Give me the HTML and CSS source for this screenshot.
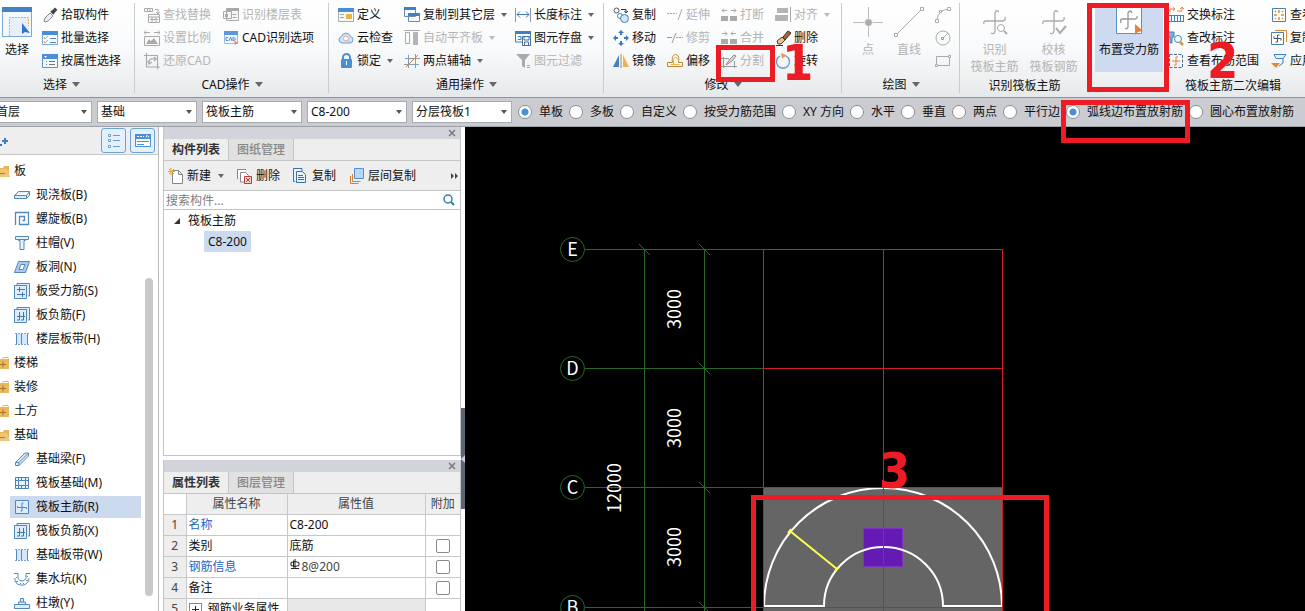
FILE: index.html
```html
<!DOCTYPE html>
<html lang="zh-CN">
<head>
<meta charset="utf-8">
<title>筏板主筋</title>
<link rel="stylesheet" href="styles.css">
</head>
<body>
<svg class="sprite" aria-hidden="true">
<defs>
<symbol id="pick" viewBox="0 0 16 16"><path d="M2 14l1-3 5-5 3 3-5 5-3 1z" fill="#e8edf2" stroke="#888"/><path d="M9 4l3 3M11 4l2-2 1 1-2 2z" fill="#444" stroke="#444" stroke-width="2"/></symbol>
<symbol id="batch" viewBox="0 0 16 16"><path d="M.5 1.500h15v13H.5z" fill="#f4f9fe" stroke="#7ea9d8"/><path d="M0 1h16v4H0z" fill="#4a8dd8"/><path d="M2 7l1 2 3-3M2 11l1 2 3-3" fill="none" stroke="#d9a441"/><path d="M8 8.500h6M8 12.500h6" stroke="#5d83ad"/></symbol>
<symbol id="prop" viewBox="0 0 16 16"><path d="M.5 1.500h15v13H.5z" fill="#f4f9fe" stroke="#5b93d0"/><path d="M0 1h16v5H0z" fill="#4a8dd8"/><path d="M2 3h3L3.500 5z" fill="#fff"/><path d="M4 8.500h1M7 8.500h6M4 11.500h1M7 11.500h6" stroke="#777"/></symbol>
<symbol id="find" viewBox="0 0 16 16"><g fill="none" stroke="#aaa"><path d="M.5 1.500h8v3h-8zM3.500 1.500v3M6 1.500v3M11 2.500h3v4M12 5l2 2 1.500-2M4.500 7.500h11v8h-11zM4.500 10h11M8 10v5M12 10v5M6 12.500h8"/></g></symbol>
<symbol id="scale" viewBox="0 0 16 16"><path d="M0 2.500h6M10 2.500h6M2 .5l-2 2 2 2M14 .5l2 2-2 2M.5 6.500h15v9H.5z" fill="none" stroke="#aaa"/><path d="M2 14l3-5 2 2 3-3 4 6z" fill="#aaa"/></symbol>
<symbol id="restore" viewBox="0 0 16 16"><path d="M2.500 0v14H16M0 2.500h13.500V16M5 10c0-4 2-5 6-4M4 8l1 3 3-2M10 4l2 2-2 2" fill="none" stroke="#aaa" stroke-width="1.200"/></symbol>
<symbol id="floor" viewBox="0 0 16 16"><path d="M3.500 1.500h12v12h-12zM.5 4.500h8v7h-8z" fill="#f5f5f5" stroke="#aaa"/><path d="M4 1h12v3H4zM2 7h3v3H2z" fill="#aaa"/><path d="M9.500 7.500h4M9.500 10.500h4" stroke="#aaa"/></symbol>
<symbol id="cad" viewBox="0 0 16 16"><path d="M1.500 1.500h13v12h-13z" fill="#edf5fd" stroke="#9dbde0"/><path d="M1 1h14v4H1z" fill="#5c98d8"/><path d="M5 7.500H3v3h2M6 11l1.500-4L9 11M10 7.500h1l1.500 1.500-1.500 1.500h-1z" fill="none" stroke="#4a8dd8"/><path d="M11 10l4 3-3 2z" fill="#e58a72"/></symbol>
<symbol id="define" viewBox="0 0 16 16"><path d="M.5 1.500h15v13H.5z" fill="#f8f8f8" stroke="#aaa"/><path d="M0 1h16v4H0z" fill="#4a8dd8"/><path d="M8 7h6v5H8z" fill="#edb34b"/><path d="M2 7.500h4M2 10.500h4" stroke="#9aa"/></symbol>
<symbol id="cloud" viewBox="0 0 16 16"><path d="M4 13a3.300 3.300 0 0 1-.5-6.500 4.700 4.700 0 0 1 9 0A3.300 3.300 0 0 1 12 13z" fill="#cfe4fa" stroke="#6a9ed4"/><circle cx="8" cy="8.500" r="2.500" fill="#fff" stroke="#e0a890"/><path d="M10 10.500l2 2" stroke="#e0a890"/></symbol>
<symbol id="lock" viewBox="0 0 16 16"><path d="M5 7V4.500a3.500 3.500 0 0 1 7 0V7" fill="none" stroke="#4a8dd8" stroke-width="2"/><rect x="3" y="6" width="11" height="9" rx="1" fill="#4a8dd8"/><path d="M8 8h1v4H8z" fill="#fff"/></symbol>
<symbol id="copyfloor" viewBox="0 0 16 16"><path d="M.5 1.500h11v8H.5zM4.500 6.500h11v8h-11z" fill="#f6fbff" stroke="#6f8ba8"/><path d="M0 0h12v3H0zM4 6h12v3H4z" fill="#4280c0"/></symbol>
<symbol id="align" viewBox="0 0 16 16"><path d="M0 .5h16M1.500 2.500h4v11h-4z" fill="none" stroke="#aaa"/><path d="M9 2h5v13H9z" fill="#b5b5b5"/></symbol>
<symbol id="axis" viewBox="0 0 16 16"><path d="M4.500 2v13M11.500 1v14M1 5.500h15M0 11.500h15" stroke="#7f9fbd"/><path d="M2 14L14 2" stroke="#c78440"/></symbol>
<symbol id="length" viewBox="0 0 16 16"><path d="M.5 1v14M15.500 1v14" stroke="#89a"/><path d="M2 7.500h12M5 4.500l-3 3 3 3M11 4.500l3 3-3 3" fill="none" stroke="#3c78bd"/></symbol>
<symbol id="save" viewBox="0 0 16 16"><path d="M0 1h16v3H0z" fill="#4280c0"/><path d="M.5 3v9H7M15.500 3v3M3 6.500h3v3H3" fill="none" stroke="#4280c0"/><path d="M7.500 6.500h8v9h-8zM9 7v3h5V7M9.500 15v-3h4v3" fill="#fff" stroke="#466d98"/></symbol>
<symbol id="filter" viewBox="0 0 16 16"><path d="M1 1h14L10 7v8l-3-2V7z" fill="#aaa"/><path d="M12 12.500h3M12 14.500h3" stroke="#aaa"/></symbol>
<symbol id="copyel" viewBox="0 0 16 16"><circle cx="3.500" cy="3.500" r="2.500" fill="#fff" stroke="#555"/><circle cx="7" cy="9" r="2.500" fill="#fff" stroke="#4280c0"/><circle cx="11.500" cy="11.500" r="4" fill="#cfe5fa" stroke="#4280c0"/><path d="M8 2.500h5v3M11.500 4l1.500 2 2-2" fill="none" stroke="#333"/></symbol>
<symbol id="move" viewBox="0 0 16 16"><path d="M8 1v4M8 11v4M1 8h4M11 8h4" stroke="#397cc5" stroke-width="2"/><path d="M8 0l3 3H5zM8 16l3-3H5zM0 8l3-3v6zM16 8l-3-3v6z" fill="#397cc5"/></symbol>
<symbol id="mirror" viewBox="0 0 16 16"><path d="M6 2v12H0z" fill="#4280c0"/><path d="M10 2v12h6z" fill="#edb34b"/><path d="M8 1v14" stroke="#b98435"/></symbol>
<symbol id="extend" viewBox="0 0 16 16"><path d="M0 6.500h10" stroke="#aaa" stroke-dasharray="2 1"/><path d="M15 2l-4 11" stroke="#aaa"/></symbol>
<symbol id="trim" viewBox="0 0 16 16"><path d="M0 7.500h5M9 3L5 13" stroke="#999"/><path d="M9 7.500h7" stroke="#999" stroke-dasharray="2 1"/></symbol>
<symbol id="offset" viewBox="0 0 16 16"><path d="M.5 13.500v-4h5c-1-6 1-8 3-8s4 2 3 8h4v4z" fill="#fdf7e6" stroke="#bb8536"/><path d="M3.500 11.500h9M6.500 11V6.500a2 2 0 0 1 4 0" fill="none" stroke="#edb34b"/></symbol>
<symbol id="break" viewBox="0 0 16 16"><path d="M0 9h7v5H0zM9 9h7v5H9z" fill="#aaa"/><path d="M1 3.500h5M10 3.500h5M3 1.500l-2 2 2 2M13 1.500l2 2-2 2" fill="none" stroke="#aaa"/></symbol>
<symbol id="merge" viewBox="0 0 16 16"><path d="M0 9h7v5H0zM9 9h7v5H9z" fill="#aaa"/><path d="M1 3.500h5M10 3.500h5M4 1.500l2 2-2 2M12 1.500l-2 2 2 2" fill="none" stroke="#aaa"/></symbol>
<symbol id="split" viewBox="0 0 16 16"><path d="M0 5.500h8M0 13.500h16M2.500 4v11M13.500 8v7" stroke="#999"/><path d="M5 12l4-6 4-4 2 1-4 5z" fill="#ddd" stroke="#888"/></symbol>
<symbol id="aligned" viewBox="0 0 16 16"><path d="M15.500 0v15" stroke="#aaa"/><path d="M2 1h11v5H2zM0 8h13v6H0z" fill="#b4b4b4"/></symbol>
<symbol id="erase" viewBox="0 0 16 16"><path d="M8 7l5-6 3 2-6 7z" fill="#a06a3a" stroke="#3c2b20"/><path d="M2 11l5-4 3 3-4 4H3z" fill="#eec188" stroke="#5b3924"/><path d="M1 15.500h7" stroke="#333"/></symbol>
<symbol id="rotate" viewBox="0 0 16 16"><path d="M5 3a6.500 6.500 0 1 0 6 0" fill="none" stroke="#5e98d8" stroke-width="1.300"/><path d="M6 0l6 2.500-5 3z" fill="#e29a44"/></symbol>
<symbol id="arc" viewBox="0 0 16 16"><path d="M2 13Q3 3 14 2" fill="none" stroke="#aaa"/><path d="M.5 12.500h3v3h-3zM12.500.5h3v3h-3zM4.500 3.500h2v2h-2z" fill="#fff" stroke="#aaa"/></symbol>
<symbol id="circle" viewBox="0 0 16 16"><circle cx="8" cy="8" r="7" fill="none" stroke="#aaa"/><path d="M8 8l5-5" stroke="#aaa"/><path d="M6.500 7.500h2v2h-2z" fill="#fff" stroke="#999"/></symbol>
<symbol id="rect" viewBox="0 0 16 16"><path d="M1.500 3.500h13v9h-13z" fill="none" stroke="#aaa"/><path d="M.5 11.500h2v2h-2zM13.500 2.500h2v2h-2z" fill="#fff" stroke="#aaa"/></symbol>
<symbol id="swap" viewBox="0 0 16 16"><path d="M1 8.500h15M1 14.500h15M3.500 8v6M6.500 8v6M9.500 8v6M12.500 8v6M15.500 8v6" stroke="#4280c0"/><path d="M2 5V2h4M5 .5L7 2 5 4M9 4h5V1M12 2l2-2 2 2" fill="none" stroke="#e08a3c"/></symbol>
<symbol id="edit" viewBox="0 0 16 16"><path d="M0 2h6v5H4v6H2V7H0z" fill="#7faee0" stroke="#4280c0"/><circle cx="10" cy="9" r="3.500" fill="#fff" stroke="#4280c0"/><path d="M12 12l3 3" stroke="#d79a36" stroke-width="2.500"/></symbol>
<symbol id="range" viewBox="0 0 16 16"><path d="M1.500 1.500h13v13h-13z" fill="none" stroke="#456d98" stroke-dasharray="3 1.500"/><path d="M8 4v8M4 8h8M8 4h2M8 12H6" stroke="#d9863d" fill="none"/></symbol>
<symbol id="view" viewBox="0 0 16 16"><path d="M1.500 1.500h13v13h-13z" fill="#fff" stroke="#4b7faf"/><path d="M8 3v3M8 10v3M3 8h3M10 8h3M4 4l1 1M12 4l-1 1M4 12l1-1M12 12l-1-1" stroke="#e18a36" stroke-width="1.500"/></symbol>
<symbol id="copyrebar" viewBox="0 0 16 16"><path d="M4 .5h11.500V12" fill="none" stroke="#e18a36"/><path d="M.5 2.500h12v12H.5z" fill="#fff" stroke="#4b7faf"/><path d="M6.500 12V5h2M3 8.500h7v2M3 8.500v-2M6.500 12h-2" fill="none" stroke="#456"/></symbol>
<symbol id="apply" viewBox="0 0 16 16"><path d="M3 1.500h12l-3 4H5zM12 5v5l-4 3" fill="#e5f2fc" stroke="#4280c0"/><path d="M0 10h9l-4 5z" fill="#e18a36"/></symbol>
<symbol id="slab" viewBox="0 0 16 16"><path d="M.5 8.500l4-4h11l-3 4zM.5 8.500v3h12l3-3v-4M12.500 8.500v3" fill="#dcecfb" stroke="#5288bd"/></symbol>
<symbol id="spiral" viewBox="0 0 16 16"><path d="M1.500 14V1.500h13v12h-9v-8h5v4h-2" fill="none" stroke="#5288bd" stroke-width="1.300"/></symbol>
<symbol id="capital" viewBox="0 0 16 16"><path d="M1.500 1.500h13v3h-3v1H10v9H6v-9H4.500v-1h-3zM4 4.500h8" fill="#e6f2fc" stroke="#5288bd"/></symbol>
<symbol id="hole" viewBox="0 0 16 16"><path d="M.5 13.500l4-11h11l-4 11z" fill="#a9caf0" stroke="#5288bd"/><path d="M5 10.500l2-5h4l-2 5z" fill="#fff" stroke="#5288bd"/></symbol>
<symbol id="rebar" viewBox="0 0 16 16"><path d="M3 2V.5h12.500V13H14M.5 2.500h12v13H.5z" fill="#dcecfb" stroke="#5288bd"/><path d="M3 6.500h8M3 11.500h8M5.500 4v5M8.500 9v5" stroke="#3f76ad"/></symbol>
<symbol id="negbar" viewBox="0 0 16 16"><path d="M3 2V.5h12.500V13H14M.5 2.500h12v13H.5z" fill="#dcecfb" stroke="#5288bd"/><path d="M3 9.500h8M5.500 5v8H3M9.500 5v8H7" fill="none" stroke="#3f76ad"/></symbol>
<symbol id="strip" viewBox="0 0 16 16"><path d="M2 3h12v10H2z" fill="#d5e8fb"/><path d="M1 2.500h14M1 13.500h14" stroke="#7da6cf" stroke-dasharray="2 1"/><path d="M2.500 3v10M7.500 3v10M13.500 3v10" stroke="#5288bd"/></symbol>
<symbol id="beam" viewBox="0 0 16 16"><path d="M1.500 11.500L11 2h3.500v3L5 14.500H1.500z" fill="#dcecfb" stroke="#5288bd"/><path d="M1.500 11.500H5v3M5 11.500L14 2.500" fill="none" stroke="#5288bd"/></symbol>
<symbol id="raft" viewBox="0 0 16 16"><path d="M1.500 2.500h13v11h-13zM4.500 5.500h7v5h-7zM4.500 2v3M11.500 2v3M4.500 11v3M11.500 11v3M1 5.500h3M12 5.500h3M1 10.500h3M12 10.500h3M7.500 2v3M7.500 11v3" fill="#e6f2fc" stroke="#4a80b5"/></symbol>
<symbol id="mainbar" viewBox="0 0 16 16"><path d="M1.500 1.500h13v13h-13z" fill="#dcecfb" stroke="#5288bd"/><path d="M9.500 4H8v8H6.500M3.500 7v1.500h9V10" fill="none" stroke="#5288bd"/></symbol>
<symbol id="pit" viewBox="0 0 16 16"><path d="M0 2.500h4v5q4 5 8 0v-5h4M1 7v3q2 4 5 4h4q5-2 5-7" fill="none" stroke="#5288bd"/><path d="M2 6.500h1M2 10.500h2M6 12.500h1M9 12.500h1M12 9.500h2M13 5.500h1" stroke="#59a"/></symbol>
<symbol id="pier" viewBox="0 0 16 16"><path d="M.5 9.500h15v4H.5zM4.500 9V7h7v2M6.500 7V3.500h3V7" fill="#dcecfb" stroke="#5288bd"/></symbol>
<symbol id="open" viewBox="0 0 16 16"><path d="M3 5h6l1-2h5v11H3z" fill="#e7b65c"/><path d="M0 6h13l3 8H3z" fill="#efc679"/><path d="M5 10.500h6" stroke="#b17b2b"/></symbol>
<symbol id="closed" viewBox="0 0 16 16"><path d="M1 4h7l1-2h5l1 2v10H1z" fill="#e9b75d"/><path d="M9 3.500h5" stroke="#fff"/><path d="M6 9.500h6M9 6.500v6" stroke="#a9742a"/></symbol>
<symbol id="new" viewBox="0 0 16 16"><path d="M4.500 2.500h6l4 4v9h-10zM10.500 2.500v4h4" fill="#fff" stroke="#888"/><path d="M3 0v7M0 3.500h7M1 1l5 5M6 1L1 6" stroke="#e9a43b"/></symbol>
<symbol id="remove" viewBox="0 0 16 16"><path d="M.5 11V1.500H9M3.500 13V4.500h5l3 3V14h-8z" fill="#fff" stroke="#888"/><path d="M7.500 8.500h7v7h-7z" fill="#f6d5d5" stroke="#b53b3b"/><path d="M9 10l4 4M13 10l-4 4" stroke="#b53b3b"/></symbol>
<symbol id="copydoc" viewBox="0 0 16 16"><path d="M2 13.500H.5V.5H9V3M3.500 3.500h6l3 3v8h-9z" fill="#e5f2fc" stroke="#3e719f"/><path d="M5 7.500h5M5 9.500h6M5 11.500h6" stroke="#3e719f"/></symbol>
<symbol id="layercopy" viewBox="0 0 16 16"><path d="M1.500 8v7.500h8M3.500 6v7.500h8" fill="none" stroke="#d97e35"/><path d="M5.500.5h9v10h-9z" fill="#b9d8fa" stroke="#4f91d3"/></symbol>
<symbol id="lens" viewBox="0 0 16 16"><circle cx="7" cy="7" r="4" fill="none" stroke="#2b7fa8" stroke-width="1.500"/><path d="M10 10l3 3" stroke="#2b7fa8" stroke-width="2"/></symbol>
</defs>
</svg>

<header class="ribbon">
  <section class="group first">
    <div class="body g-select">
      <button class="large"><svg viewBox="0 0 30 30" class="ic30"><path d="M.5.5h29v29H.5z" fill="#f3f8ff" stroke="#7ba8d9"/><path d="M0 0h30v5H0z" fill="#4280c8"/><path d="M7 29V10h20v19z" fill="#e8effa"/><path d="M7.500 29V10.500h19V19" fill="none" stroke="#e3b04a" stroke-dasharray="2 1"/><path d="M20 16v11l3-2 5 1z" fill="#3475c4"/></svg><span>选择</span></button>
      <div class="cmds one">
        <button class="cmd"><svg><use href="#pick"/></svg>拾取构件</button>
        <button class="cmd"><svg><use href="#batch"/></svg>批量选择</button>
        <button class="cmd"><svg><use href="#prop"/></svg>按属性选择</button>
      </div>
    </div>
    <button class="title drop">选择</button>
  </section>
  <section class="group">
    <div class="body">
      <div class="cmds cad">
        <button class="cmd" disabled><svg><use href="#find"/></svg>查找替换</button>
        <button class="cmd" disabled><svg><use href="#scale"/></svg>设置比例</button>
        <button class="cmd" disabled><svg><use href="#restore"/></svg>还原CAD</button>
        <button class="cmd" disabled><svg><use href="#floor"/></svg>识别楼层表</button>
        <button class="cmd"><svg><use href="#cad"/></svg>CAD识别选项</button>
      </div>
    </div>
    <button class="title drop">CAD操作</button>
  </section>
  <section class="group">
    <div class="body">
      <div class="cmds common">
        <button class="cmd"><svg><use href="#define"/></svg>定义</button>
        <button class="cmd"><svg><use href="#cloud"/></svg>云检查</button>
        <button class="cmd drop"><svg><use href="#lock"/></svg>锁定</button>
        <button class="cmd drop"><svg><use href="#copyfloor"/></svg>复制到其它层</button>
        <button class="cmd drop" disabled><svg><use href="#align"/></svg>自动平齐板</button>
        <button class="cmd drop"><svg><use href="#axis"/></svg>两点辅轴</button>
        <button class="cmd drop"><svg><use href="#length"/></svg>长度标注</button>
        <button class="cmd drop"><svg><use href="#save"/></svg>图元存盘</button>
        <button class="cmd" disabled><svg><use href="#filter"/></svg>图元过滤</button>
      </div>
    </div>
    <button class="title drop">通用操作</button>
  </section>
  <section class="group">
    <div class="body">
      <div class="cmds modify">
        <button class="cmd"><svg><use href="#copyel"/></svg>复制</button>
        <button class="cmd"><svg><use href="#move"/></svg>移动</button>
        <button class="cmd"><svg><use href="#mirror"/></svg>镜像</button>
        <button class="cmd" disabled><svg><use href="#extend"/></svg>延伸</button>
        <button class="cmd" disabled><svg><use href="#trim"/></svg>修剪</button>
        <button class="cmd"><svg><use href="#offset"/></svg>偏移</button>
        <button class="cmd" disabled><svg><use href="#break"/></svg>打断</button>
        <button class="cmd" disabled><svg><use href="#merge"/></svg>合并</button>
        <button class="cmd" disabled><svg><use href="#split"/></svg>分割</button>
        <button class="cmd drop" disabled><svg><use href="#aligned"/></svg>对齐</button>
        <button class="cmd"><svg><use href="#erase"/></svg>删除</button>
        <button class="cmd"><svg><use href="#rotate"/></svg>旋转</button>
      </div>
    </div>
    <button class="title drop">修改</button>
  </section>
  <section class="group">
    <div class="body g-draw">
      <button class="large" disabled><svg viewBox="0 0 30 30" class="ic30"><path d="M15.500 0v30M0 15.500h30" stroke="#bbb"/><circle cx="15.500" cy="15.500" r="4" fill="#aaa" stroke="#f6f7f8"/></svg><span>点</span></button>
      <button class="large" disabled><svg viewBox="0 0 30 30" class="ic30"><path d="M2 28L28 2" stroke="#aaa"/><path d="M.5 26.500h3v3h-3zM26.500.5h3v3h-3z" fill="#fff" stroke="#aaa"/></svg><span>直线</span></button>
      <div class="cmds one">
        <button class="cmd" disabled aria-label="弧"><svg><use href="#arc"/></svg></button>
        <button class="cmd" disabled aria-label="圆"><svg><use href="#circle"/></svg></button>
        <button class="cmd" disabled aria-label="矩形"><svg><use href="#rect"/></svg></button>
      </div>
    </div>
    <button class="title drop">绘图</button>
  </section>
  <section class="group">
    <div class="body g-identify">
      <button class="large" disabled><svg viewBox="0 0 30 30" class="ic30"><path d="M19 5q-3-3-4 1v18q-1 4-4 2M4 17q-1-3 2-3h16q4 0 3-4" fill="none" stroke="#aaa" stroke-width="1.300"/><circle cx="21" cy="21" r="3.500" fill="#fff" stroke="#aaa"/><path d="M24 24l3 3" stroke="#aaa" stroke-width="2"/></svg><span>识别<br>筏板主筋</span></button>
      <button class="large" disabled><svg viewBox="0 0 30 30" class="ic30"><path d="M19 5q-3-3-4 1v18q-1 4-4 2M4 17q-1-3 2-3h16q4 0 3-4" fill="none" stroke="#aaa" stroke-width="1.300"/><path d="M17 21l4 5 6-7" fill="none" stroke="#aaa" stroke-width="2"/></svg><span>校核<br>筏板钢筋</span></button>
    </div>
    <div class="title plain">识别筏板主筋</div>
  </section>
  <section class="group last">
    <div class="body g-edit">
      <button class="large active"><svg viewBox="0 0 30 30" class="ic30"><path d="M2.500 0v26.500h25V0z" fill="#fff" stroke="#5b93c4"/><path d="M18 6q-2-4-4 0v14q-1 3-3 1M7 16q-1-4 1-4h12q4 0 3-3" fill="none" stroke="#999" stroke-width="1.300"/><path d="M21 17v11l3-3 5-1z" fill="#e08340"/></svg><span>布置受力筋</span></button>
      <div class="cmds edit">
        <button class="cmd"><svg><use href="#swap"/></svg>交换标注</button>
        <button class="cmd"><svg><use href="#edit"/></svg>查改标注</button>
        <button class="cmd"><svg><use href="#range"/></svg>查看布筋范围</button>
        <button class="cmd"><svg><use href="#view"/></svg>查看布筋</button>
        <button class="cmd"><svg><use href="#copyrebar"/></svg>复制钢筋</button>
        <button class="cmd"><svg><use href="#apply"/></svg>应用同名</button>
      </div>
    </div>
    <div class="title plain">筏板主筋二次编辑</div>
  </section>
</header>

<form class="options">
  <span class="combo"><select aria-label="楼层"><option>首层</option></select></span>
  <span class="combo"><select aria-label="类型"><option>基础</option></select></span>
  <span class="combo"><select aria-label="构件类型"><option>筏板主筋</option></select></span>
  <span class="combo"><select aria-label="构件"><option>C8-200</option></select></span>
  <span class="combo"><select aria-label="分层"><option>分层筏板1</option></select></span>
  <fieldset class="radios">
    <label><input type="radio" name="range" checked>单板</label>
    <label><input type="radio" name="range">多板</label>
    <label><input type="radio" name="range">自定义</label>
    <label><input type="radio" name="range">按受力筋范围</label>
    <label><input type="radio" name="dir">XY 方向</label>
    <label><input type="radio" name="dir">水平</label>
    <label><input type="radio" name="dir">垂直</label>
    <label><input type="radio" name="dir">两点</label>
    <label><input type="radio" name="dir">平行边</label>
    <label><input type="radio" name="dir" checked>弧线边布置放射筋</label>
    <label><input type="radio" name="dir">圆心布置放射筋</label>
  </fieldset>
</form>

<main class="work">
  <nav class="modules">
    <div class="modebar">
      <svg class="plus" viewBox="0 0 10 12"><path d="M0 10h2" stroke="#3f76ad" stroke-width="2"/><path d="M5 3v6M2 6h6" stroke="#3f7fc1" stroke-width="2"/></svg>
      <button class="mode" aria-label="列表"><svg viewBox="0 0 16 16"><path d="M2.500 1.500h2v2h-2zM2.500 6.500h2v2h-2zM2.500 12.500h2v2h-2z" fill="#fff" stroke="#6b9cc8"/><path d="M7 2.500h7M7 7.500h7M7 13.500h7" stroke="#6b9cc8"/></svg></button>
      <button class="mode" aria-label="窗口"><svg viewBox="0 0 16 16"><path d="M.5 1.500h15v12H.5z" fill="#fff" stroke="#4a8dd8"/><path d="M0 1h16v5H0z" fill="#4a8dd8"/><path d="M2 3.500h7M11 3h3l-1.500 2z" stroke="#fff" stroke-dasharray="2 1"/><path d="M2 8.500h12M2 11.500h7" stroke="#4a8dd8"/></svg></button>
    </div>
    <ul class="tree">
      <li class="folder"><svg><use href="#open"/></svg>板</li>
      <li><svg><use href="#slab"/></svg>现浇板(B)</li>
      <li><svg><use href="#spiral"/></svg>螺旋板(B)</li>
      <li><svg><use href="#capital"/></svg>柱帽(V)</li>
      <li><svg><use href="#hole"/></svg>板洞(N)</li>
      <li><svg><use href="#rebar"/></svg>板受力筋(S)</li>
      <li><svg><use href="#negbar"/></svg>板负筋(F)</li>
      <li><svg><use href="#strip"/></svg>楼层板带(H)</li>
      <li class="folder"><svg><use href="#closed"/></svg>楼梯</li>
      <li class="folder"><svg><use href="#closed"/></svg>装修</li>
      <li class="folder"><svg><use href="#closed"/></svg>土方</li>
      <li class="folder"><svg><use href="#open"/></svg>基础</li>
      <li><svg><use href="#beam"/></svg>基础梁(F)</li>
      <li><svg><use href="#raft"/></svg>筏板基础(M)</li>
      <li class="current"><svg><use href="#mainbar"/></svg>筏板主筋(R)</li>
      <li><svg><use href="#negbar"/></svg>筏板负筋(X)</li>
      <li><svg><use href="#strip"/></svg>基础板带(W)</li>
      <li><svg><use href="#pit"/></svg>集水坑(K)</li>
      <li><svg><use href="#pier"/></svg>柱墩(Y)</li>
    </ul>
    <div class="thumb"></div>
  </nav>

  <div class="docks">
    <section class="dock list">
      <div class="strip"><button class="close" aria-label="关闭"><svg viewBox="0 0 8 8"><path d="M1 1l6 6M7 1L1 7" stroke="#777" stroke-width="1.500"/></svg></button></div>
      <div class="tabs"><button class="tab on">构件列表</button><button class="tab">图纸管理</button></div>
      <div class="tools">
        <button class="tool drop"><svg><use href="#new"/></svg>新建</button>
        <button class="tool"><svg><use href="#remove"/></svg>删除</button>
        <button class="tool"><svg><use href="#copydoc"/></svg>复制</button>
        <button class="tool"><svg><use href="#layercopy"/></svg>层间复制</button>
        <button class="more" aria-label="更多"><svg viewBox="0 0 8 6"><path d="M0 0l3 3-3 3zM4 0l3 3-3 3z" fill="#444"/></svg></button>
      </div>
      <div class="search"><input type="text" placeholder="搜索构件..." aria-label="搜索构件"><svg><use href="#lens"/></svg></div>
      <div class="items">
        <div class="parent"><svg viewBox="0 0 8 8"><path d="M7 1v6H1z" fill="#333"/></svg>筏板主筋</div>
        <div class="child">C8-200</div>
      </div>
    </section>
    <section class="dock props">
      <div class="strip"><button class="close" aria-label="关闭"><svg viewBox="0 0 8 8"><path d="M1 1l6 6M7 1L1 7" stroke="#777" stroke-width="1.500"/></svg></button></div>
      <div class="tabs"><button class="tab on">属性列表</button><button class="tab">图层管理</button></div>
      <table>
        <colgroup><col class="c-no"><col class="c-name"><col><col class="c-add"></colgroup>
        <thead><tr><td></td><th>属性名称</th><th>属性值</th><th>附加</th></tr></thead>
        <tbody>
          <tr><th>1</th><td class="key">名称</td><td>C8-200</td><td></td></tr>
          <tr><th>2</th><td>类别</td><td>底筋</td><td class="tick"><input type="checkbox" aria-label="类别附加"></td></tr>
          <tr><th>3</th><td class="key">钢筋信息</td><td class="soft"><svg class="grade" viewBox="0 0 10 12"><path d="M5 0v10M3.500 1.500v7M1 3.500q4-2 8 0v3q-4 2-8 0zM1 9.500h8" fill="none" stroke="#222"/></svg>8@200</td><td class="tick"><input type="checkbox" aria-label="钢筋信息附加"></td></tr>
          <tr><th>4</th><td>备注</td><td></td><td class="tick"><input type="checkbox" aria-label="备注附加"></td></tr>
          <tr><th>5</th><td><button class="expand" aria-label="展开"><svg viewBox="0 0 11 11"><path d="M2 5.500h7M5.500 2v7" stroke="#222"/></svg></button>钢筋业务属性</td><td class="blank"></td><td></td></tr>
        </tbody>
      </table>
    </section>
  </div>
  <div class="splitter"><button class="grip" aria-label="折叠"><svg viewBox="0 0 4 8"><path d="M4 0v8L0 4z" fill="#ccd"/></svg></button></div>

  <svg class="canvas" viewBox="465 127 840 484" preserveAspectRatio="xMinYMin slice">
    <path class="slab" d="M763 487h240v130H763z"/>
    <path class="column" d="M863.500 528.500h39v38h-39z"/>
    <g class="grid">
      <path d="M585 249.500h178M585 368.500h178M585 487.500h178M585 607.500h178M644.500 249v368M704.500 249v368"/>
      <path d="M639 244l11 11M699 244l11 11M699 363l11 11M699 482l11 11M699 602l11 11"/>
      <circle cx="572.500" cy="249.500" r="12"/><circle cx="572.500" cy="368.500" r="12"/><circle cx="572.500" cy="487.500" r="12"/><circle cx="572.500" cy="607.500" r="12"/>
    </g>
    <path class="outline" d="M764 606a119 118 0 0 1 238 0h-59a59.500 59 0 0 0-119 0z"/>
    <g class="axes">
      <path d="M763 249h240v1H763z"/><path d="M763 368h240v1H763z"/><path d="M763 487h240v1H763z"/><path d="M763 607h240v1H763z"/>
      <path d="M763 249h1v368h-1z"/><path d="M883 249h1v368h-1z"/><path d="M1002 249h1v368h-1z"/>
    </g>
    <path class="span" d="M790 531l47 38M788 533l3-4M835 571l4-4"/>
    <g class="labels">
      <text x="572.500" y="256">E</text><text x="572.500" y="375">D</text><text x="572.500" y="494">C</text><text x="572.500" y="614">B</text>
      <text transform="translate(681 309) rotate(-90)">3000</text>
      <text transform="translate(681 428) rotate(-90)">3000</text>
      <text transform="translate(681 547) rotate(-90)">3000</text>
      <text transform="translate(621 488) rotate(-90)">12000</text>
    </g>
  </svg>
</main>

<div class="mark m-split"></div><div class="num n1">1</div>
<div class="mark m-place"></div><div class="num n2">2</div>
<div class="mark m-arc"></div>
<div class="mark m-draw"></div><div class="num n3">3</div>
</body>
</html>
```
FILE: styles.css
```css
* { box-sizing: border-box; }
body {
  margin: 0;
  height: 100vh;
  display: flex;
  flex-direction: column;
  position: relative;
  overflow: hidden;
  background: #fff;
  color: #111;
  font: 12px/16px "Noto Sans", "Noto Sans CJK SC", sans-serif;
}
button, input, select { font: inherit; color: inherit; margin: 0; }
button { border: 0; padding: 0; background: none; white-space: nowrap; }
svg { flex: none; display: block; }
.sprite { position: absolute; width: 0; height: 0; }

.drop::after {
  content: "";
  border: 3px solid transparent;
  border-top: 4px solid #666;
  border-bottom: 0;
  margin-left: 3px;
}
.drop:disabled::after { border-top-color: #bbb; }

/* Ribbon */
.ribbon {
  flex: none;
  display: flex;
  height: 98px;
  overflow: hidden;
  background: linear-gradient(#fff, #f9fafb 50%, #e6e9eb);
  border-bottom: 1px solid #8d9298;
}
.group {
  flex: none;
  display: flex;
  flex-direction: column;
  position: relative;
}
.group::after {
  content: "";
  position: absolute;
  right: 0;
  top: 3px;
  bottom: 4px;
  width: 1px;
  background: #c8ccd0;
}
.first { margin-left: -12px; width: 147px; padding-left: 12px; }
.first .title { margin-left: -12px; }
.last { width: 288px; }
.body { display: flex; height: 73px; padding: 3px 9px 0; }
.title { height: 23px; display: flex; align-items: center; justify-content: center; }
.title.drop::after { border-width: 4px; border-top-width: 5px; border-bottom-width: 0; margin-left: 5px; }
.plain { padding-top: 3px; }
.cmds {
  display: grid;
  grid-auto-flow: column;
  grid-template-rows: repeat(3, 23px);
  align-content: start;
  justify-items: start;
}
.cmd { display: flex; align-items: center; gap: 3px; height: 23px; }
.cmd svg, .tool svg, .tree svg, .search svg { width: 16px; height: 16px; }
button:disabled { color: #b4b4b4; }
.cad { grid-template-columns: 79px 97px; }
.common { grid-template-columns: 66px 111px 80px; }
.modify { grid-template-columns: 54px 54px 54px 58px; }
.edit { grid-template-columns: 103px 80px; }
.large {
  display: flex;
  flex-direction: column;
  align-items: center;
  gap: 4px;
  padding-top: 4px;
  line-height: 17px;
}
.ic30 { width: 30px; height: 30px; }
.g-select { padding: 3px 0 0; gap: 8px; }
.g-select .large { width: 34px; }
.g-draw { padding-left: 11px; gap: 11px; }
.g-draw .large { width: 30px; }
.g-identify { padding: 3px 10px 0; gap: 10px; width: 129px; }
.g-identify .large { width: 49px; }
.g-edit { padding: 3px 0 0 6px; gap: 5px; }
.g-edit .large { width: 68px; height: 69px; }
.active { background: #cddaef; }

/* Option bar */
.options {
  flex: none;
  display: flex;
  align-items: center;
  gap: 5px;
  height: 29px;
  margin: 0;
  padding-left: 0;
  overflow: hidden;
  background: #caccd2;
  border-bottom: 1px solid #9da2a8;
}
.combo { flex: none; position: relative; width: 100px; height: 22px; }
.combo:first-child { margin-left: -8px; }
.combo select {
  appearance: none;
  width: 100%;
  height: 100%;
  padding: 0 16px 0 3px;
  background: #fff;
  border: 1px solid #a8abb0;
  border-radius: 0;
}
.combo::after {
  content: "";
  position: absolute;
  right: 5px;
  top: 9px;
  border: 3px solid transparent;
  border-top: 4px solid #555;
  border-bottom: 0;
  pointer-events: none;
}
.radios { flex: none; display: flex; gap: 6px; border: 0; margin: 0; padding: 0 0 0 1px; }
.radios label { display: flex; align-items: center; gap: 7px; white-space: nowrap; }
.radios input {
  appearance: none;
  width: 14px;
  height: 14px;
  border: 1px solid #8b8f95;
  border-radius: 50%;
  background: #fff;
}
.radios input:checked { background: radial-gradient(circle, #4a90d9 0 3px, #fff 4px); }

/* Work area */
.work { flex: 1; min-height: 0; display: flex; overflow: hidden; }
.modules { flex: none; width: 159px; position: relative; border-right: 1px solid #b9bbbe; }
.modebar {
  display: flex;
  align-items: center;
  justify-content: flex-end;
  gap: 4px;
  height: 28px;
  padding-right: 3px;
  background: #eee;
  border-bottom: 1px solid #c5c5c5;
}
.plus { width: 10px; height: 12px; margin-right: auto; }
.mode {
  width: 25px;
  height: 25px;
  display: grid;
  place-items: center;
  background: #e4f1fd;
  border: 1px solid #6ba2d8;
  border-radius: 3px;
}
.mode svg { width: 16px; height: 16px; }
.tree { list-style: none; margin: 0; padding: 5px 17px 0 10px; }
.tree li {
  display: flex;
  align-items: center;
  gap: 6px;
  height: 22px;
  margin: 0 0 2px;
  padding-left: 4px;
}
.tree .folder { margin-left: -16px; padding: 0; gap: 4px; }
.current { background: #ccdaf0; }
.thumb {
  position: absolute;
  right: 5px;
  top: 151px;
  bottom: 15px;
  width: 8px;
  border-radius: 4px;
  background: #c9c9c9;
}

.docks { flex: none; width: 302px; padding-left: 4px; display: flex; flex-direction: column; gap: 4px; }
.dock { border: 1px solid #c2c4c8; border-top: 0; background: #fff; overflow: hidden; }
.list { flex: 1; min-height: 0; }
.props { flex: none; height: 151px; border-bottom: 0; }
.strip { height: 12px; display: flex; justify-content: flex-end; align-items: center; padding-right: 4px; background: #d1d4da; }
.close svg { width: 8px; height: 8px; }
.tabs { display: flex; height: 22px; background: #eee; border-bottom: 1px solid #c4c4c4; }
.tab { width: 65px; border-right: 1px solid #c4c4c4; background: #e1e1e1; color: #888; font-weight: 500; }
.tab.on { background: #eee; color: #333; font-weight: 700; }
.tools { display: flex; align-items: center; gap: 13px; height: 30px; padding: 0 1px 0 4px; background: #eee; border-bottom: 1px solid #c4c4c4; }
.tool { display: flex; align-items: center; gap: 3px; }
.tool.drop::after { margin-left: 4px; }
.more { margin-left: auto; }
.more svg { width: 8px; height: 6px; }
.search { display: flex; align-items: center; height: 19px; padding-right: 3px; border-bottom: 1px solid #c4c4c4; }
.search input { flex: 1; min-width: 0; height: 18px; border: 0; padding: 0 2px; outline: 0; }
.search input::placeholder { color: #808080; opacity: 1; }
.parent { display: flex; align-items: center; gap: 7px; height: 21px; padding-left: 9px; }
.parent svg { width: 8px; height: 8px; }
.child { width: max-content; height: 21px; line-height: 21px; margin-left: 40px; padding: 0 4px; background: #ccdaf0; }

table { width: 100%; table-layout: fixed; border-collapse: collapse; }
.c-no { width: 22px; }
.c-name { width: 101px; }
.c-add { width: 35px; }
td, th {
  height: 21px;
  padding: 0 0 0 2px;
  border: solid #c8c8c8;
  border-width: 0 0 1px 1px;
  font-weight: 400;
  text-align: left;
  white-space: nowrap;
  overflow: hidden;
  line-height: 16px;
}
thead td, thead th { height: 20px; }
tr > :first-child { border-left: 0; }
th { background: #eee; color: #444; text-align: center; padding: 0; }
.key { color: #2563c9; }
.soft { color: #444; }
.blank { background: #e8e8e8; }
.tick { padding: 0; text-align: center; }
.tick input { appearance: none; display: block; width: 14px; height: 14px; margin: 0 auto; border: 1px solid #888; border-radius: 2px; background: #fff; }
.grade { display: inline-block; width: 10px; height: 12px; margin-right: 2px; }
.expand { width: 13px; height: 13px; margin-right: 6px; border: 1px solid #888; vertical-align: middle; }

.splitter { flex: none; width: 4px; display: flex; align-items: flex-end; padding-bottom: 102px; background: #fff; }
.grip { width: 4px; height: 101px; display: grid; place-items: center; background: #5c6672; }
.grip svg { width: 4px; height: 8px; }

/* Drawing */
.canvas { flex: 1; min-width: 0; height: 100%; background: #000; }
.slab { fill: #656565; }
.column { fill: #6519b5; stroke: #7a35c0; }
.grid { fill: none; stroke: #256b25; }
.outline { fill: none; stroke: #fff; stroke-width: 2; }
.axes { fill: #d01c22; }
.span { fill: none; stroke: #ffff4d; stroke-width: 2; }
.labels { fill: #fff; font: 18px "Noto Sans CJK SC", sans-serif; text-anchor: middle; }

/* Call-outs */
.mark { position: absolute; border: 5px solid #ed1c24; pointer-events: none; }
.m-split { left: 716px; top: 45px; width: 59px; height: 37px; }
.m-place { left: 1087px; top: 3px; width: 82px; height: 89px; }
.m-arc { left: 1061px; top: 100px; width: 129px; height: 43px; }
.m-draw { left: 751px; top: 495px; width: 298px; bottom: -5px; }
.num {
  position: absolute;
  color: #ed1c24;
  font: bold 50px/50px "DejaVu Sans Condensed", "DejaVu Sans", sans-serif;
  pointer-events: none;
}
.n1 { left: 782px; top: 38px; }
.n2 { left: 1207px; top: 36px; }
.n3 { left: 879px; top: 446px; }
```
